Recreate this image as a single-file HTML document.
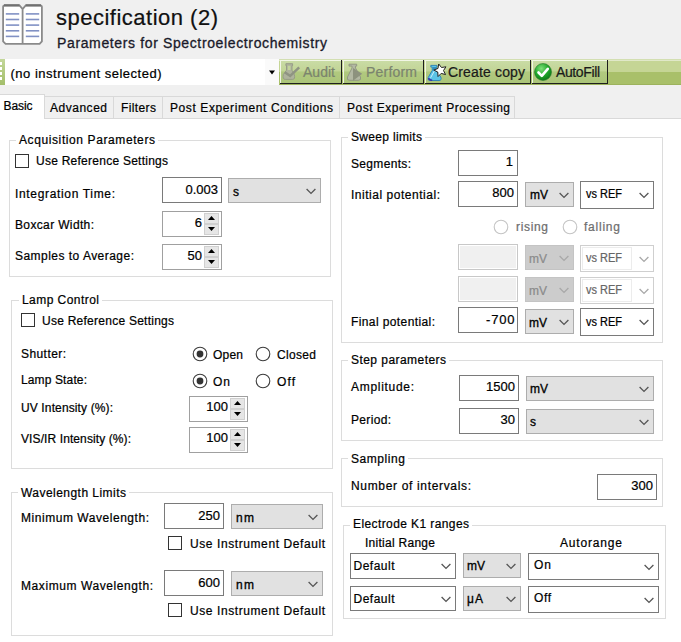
<!DOCTYPE html>
<html><head><meta charset="utf-8"><style>
html,body{margin:0;padding:0;width:681px;height:642px;overflow:hidden;background:#fff;position:relative}
body>div,body>svg{position:absolute}
.t{font-family:'Liberation Sans', sans-serif;white-space:pre;-webkit-text-stroke:0.22px currentColor}
</style></head><body>
<div style="left:0px;top:0px;width:681px;height:119px;background:#f0f0f0"></div>
<svg style="left:1px;top:2px" width="44" height="44" viewBox="0 0 44 44">
<path d="M3.5 3.3 H18.5 L21.6 7 L24.7 3.3 H39.3 Q40.9 3.3 40.9 5 V39.3 L38.6 41.9 H4.6 L2.1 39.3 V5 Q2.1 3.3 3.5 3.3Z" fill="#fff" stroke="#8a8a8a" stroke-width="1.8"/>
<path d="M3 3.3 H18.5 M24.7 3.3 H40" stroke="#707070" stroke-width="2.2"/>
<path d="M21.6 7.5 V42" stroke="#8a8a8a" stroke-width="1.8"/>
<g stroke="#8191c4" stroke-width="1.6">
<path d="M4.8 11.9 H18.2"/><path d="M4.8 17.5 H18.2"/><path d="M4.8 23.1 H18.2"/><path d="M4.8 28.8 H18.2"/><path d="M4.8 34.4 H18.2"/>
<path d="M24.8 11.9 H38.2"/><path d="M24.8 17.5 H38.2"/><path d="M24.8 23.1 H38.2"/><path d="M24.8 28.8 H38.2"/><path d="M24.8 34.4 H38.2"/>
</g></svg>
<div class="t" style="left:56.00px;top:5px;font-size:22px;line-height:25px;letter-spacing:0.495px;font-weight:400;color:#111;">specification (2)</div>
<div class="t" style="left:57.00px;top:35px;font-size:14px;line-height:16px;letter-spacing:0.631px;font-weight:400;color:#1a1a2a;-webkit-text-stroke:0.3px #1a1a2a">Parameters for Spectroelectrochemistry</div>
<div style="left:0px;top:59px;width:681px;height:13px;background:#c5d595"></div>
<div style="left:0px;top:72px;width:681px;height:13px;background:#a9c06a"></div>
<div style="left:0px;top:59px;width:681px;height:1px;background:#d3dfb2"></div>
<div style="left:0px;top:60px;width:681px;height:1px;background:#e0e8c8"></div>
<div style="left:0px;top:84px;width:681px;height:1px;background:#9db35d"></div>
<div style="left:0px;top:59px;width:5px;height:26px;background:linear-gradient(#c3d79a,#a3be6a)"></div>
<div style="left:0px;top:62px;width:2px;height:3px;background:#fff"></div>
<div style="left:0px;top:67px;width:2px;height:3px;background:#fff"></div>
<div style="left:0px;top:72px;width:2px;height:3px;background:#fff"></div>
<div style="left:0px;top:77px;width:2px;height:3px;background:#fff"></div>
<div style="left:5px;top:59px;width:274px;height:26px;background:#fff"></div>
<div style="left:265px;top:59px;width:14px;height:26px;background:#fafafa"></div>
<svg style="left:268px;top:70px" width="8" height="5" viewBox="0 0 8 5"><path d="M1 0.5 H7 L4 4.5Z" fill="#000"/></svg>
<div style="left:280px;top:60px;width:62px;height:24px;background:linear-gradient(#cadca6 0%,#c2d596 45%,#b1c97f 50%,#aac478 100%)"></div>
<div style="left:280px;top:60px;width:61px;height:1px;background:#f2f6e6"></div>
<div style="left:280px;top:60px;width:1px;height:23px;background:#f2f6e6"></div>
<div style="left:280px;top:83px;width:62px;height:1px;background:#1e1e1e"></div>
<div style="left:341px;top:60px;width:1px;height:24px;background:#1e1e1e"></div>
<div class="t" style="left:303.00px;top:64px;font-size:14px;line-height:16px;letter-spacing:0.020px;font-weight:400;color:#7b846e;">Audit</div>
<div style="left:343px;top:60px;width:81px;height:24px;background:linear-gradient(#cadca6 0%,#c2d596 45%,#b1c97f 50%,#aac478 100%)"></div>
<div style="left:343px;top:60px;width:80px;height:1px;background:#f2f6e6"></div>
<div style="left:343px;top:60px;width:1px;height:23px;background:#f2f6e6"></div>
<div style="left:343px;top:83px;width:81px;height:1px;background:#1e1e1e"></div>
<div style="left:423px;top:60px;width:1px;height:24px;background:#1e1e1e"></div>
<div class="t" style="left:366.00px;top:64px;font-size:14px;line-height:16px;letter-spacing:0.201px;font-weight:400;color:#7b846e;">Perform</div>
<div style="left:425px;top:60px;width:106px;height:24px;background:linear-gradient(#cadca6 0%,#c2d596 45%,#b1c97f 50%,#aac478 100%)"></div>
<div style="left:425px;top:60px;width:105px;height:1px;background:#f2f6e6"></div>
<div style="left:425px;top:60px;width:1px;height:23px;background:#f2f6e6"></div>
<div style="left:425px;top:83px;width:106px;height:1px;background:#1e1e1e"></div>
<div style="left:530px;top:60px;width:1px;height:24px;background:#1e1e1e"></div>
<div class="t" style="left:448.00px;top:64px;font-size:14px;line-height:16px;letter-spacing:0.152px;font-weight:400;color:#1a1a1a;">Create copy</div>
<div style="left:532px;top:60px;width:76px;height:24px;background:linear-gradient(#cadca6 0%,#c2d596 45%,#b1c97f 50%,#aac478 100%)"></div>
<div style="left:532px;top:60px;width:75px;height:1px;background:#f2f6e6"></div>
<div style="left:532px;top:60px;width:1px;height:23px;background:#f2f6e6"></div>
<div style="left:532px;top:83px;width:76px;height:1px;background:#1e1e1e"></div>
<div style="left:607px;top:60px;width:1px;height:24px;background:#1e1e1e"></div>
<div class="t" style="left:556.00px;top:64px;font-size:14px;line-height:16px;letter-spacing:-0.384px;font-weight:400;color:#1a1a1a;">AutoFill</div>
<svg style="left:282px;top:62px" width="19" height="19" viewBox="0 0 19 19">
<path d="M3.9 1.7 H10.6 V3.6 H10 V8.2 L12.3 12.5 Q13.5 17.4 10.5 17.4 H3.3 Q0.3 17.4 1.3 12.5 L4.5 8.2 V3.6 H3.9Z" fill="#aeb39c" stroke="#939884" stroke-width="0.9"/>
<path d="M5.8 3.8 H8.5 V8 H5.8Z" fill="#c3d49a"/>
<path d="M2.8 10.2 L8.2 14 L17.2 5.4" fill="none" stroke="#8f9482" stroke-width="2.5"/>
</svg>
<svg style="left:346px;top:62px" width="19" height="20" viewBox="0 0 19 20">
<path d="M3 2.2 H10.7 V4.1 H9.5 V6 L14.5 15 Q15.5 18.3 12.5 18.3 H3.5 Q0.5 18.3 1.5 15 L6 6 V4.1 H3Z" fill="#b3b8a3" stroke="#8e9480" stroke-width="0.9"/>
<path d="M7 6 L16.2 11.8 L7 18.7Z" fill="#8d927e"/>
</svg>
<svg style="left:426px;top:62px" width="22" height="22" viewBox="0 0 22 22">
<path d="M4.8 3.4 H11 V5.1 H10.3 V8.6 L14.8 15 Q16 18.5 13 18.5 H4 Q1.2 18.5 2.2 15.5 L6.2 8.6 V5.1 H4.8Z" fill="#5cc4e6" stroke="#2a80b4" stroke-width="0.9"/>
<path d="M6.5 5 H10 V8.5 H6.5Z" fill="#2f8fbf"/>
<path d="M2.6 16.2 Q3 18.2 6.2 18.3" stroke="#3a32a8" stroke-width="1.6" fill="none"/>
<path d="M4.6 15.8 L8.2 9.2" stroke="#e8f8ff" stroke-width="1" opacity="0.8"/>
<path d="M12.69 2.02 L15.51 5.51 L19.94 4.81 L17.50 8.56 L19.53 12.55 L15.20 11.39 L12.03 14.56 L11.80 10.09 L7.81 8.05 L11.99 6.45Z" fill="#fff" stroke="#222" stroke-width="1"/>
</svg>
<svg style="left:534px;top:63px" width="19" height="19" viewBox="0 0 19 19">
<defs><radialGradient id="gg" cx="0.4" cy="0.3" r="0.7"><stop offset="0" stop-color="#7fe07a"/><stop offset="0.6" stop-color="#1fa52a"/><stop offset="1" stop-color="#0c7a18"/></radialGradient></defs>
<circle cx="9" cy="9" r="8.5" fill="url(#gg)" stroke="#2c7a2c" stroke-width="0.6"/>
<path d="M4.5 9.5 L7.8 12.8 L13.8 5.8" fill="none" stroke="#fff" stroke-width="2.6" stroke-linecap="round" stroke-linejoin="round"/>
</svg>
<div class="t" style="left:10.50px;top:66px;font-size:13px;line-height:15px;letter-spacing:0.502px;font-weight:400;color:#000;">(no instrument selected)</div>
<div style="left:44px;top:96px;width:637px;height:23px;background:#f0f0f0"></div>
<div style="left:44px;top:118px;width:637px;height:1px;background:#d9d9d9"></div>
<div style="left:44px;top:96px;width:471px;height:1px;background:#d9d9d9"></div>
<div style="left:113px;top:96px;width:1px;height:22px;background:#d9d9d9"></div>
<div style="left:162px;top:96px;width:1px;height:22px;background:#d9d9d9"></div>
<div style="left:339px;top:96px;width:1px;height:22px;background:#d9d9d9"></div>
<div style="left:514px;top:96px;width:1px;height:22px;background:#d9d9d9"></div>
<div style="left:0px;top:94px;width:45px;height:25px;background:#fff;border:1px solid #d9d9d9;border-bottom:none;border-left:none;box-sizing:border-box"></div>
<div class="t" style="left:3.50px;top:99px;font-size:12px;line-height:14px;letter-spacing:-0.086px;font-weight:400;color:#000;">Basic</div>
<div class="t" style="left:50.00px;top:101px;font-size:12px;line-height:14px;letter-spacing:0.518px;font-weight:400;color:#000;">Advanced</div>
<div class="t" style="left:121.00px;top:101px;font-size:12px;line-height:14px;letter-spacing:0.388px;font-weight:400;color:#000;">Filters</div>
<div class="t" style="left:170.00px;top:101px;font-size:12px;line-height:14px;letter-spacing:0.597px;font-weight:400;color:#000;">Post Experiment Conditions</div>
<div class="t" style="left:347.00px;top:101px;font-size:12px;line-height:14px;letter-spacing:0.491px;font-weight:400;color:#000;">Post Experiment Processing</div>
<div style="left:9px;top:140px;width:322px;height:137px;border:1px solid #dcdcdc;box-sizing:border-box"></div>
<div style="left:16px;top:138px;width:142px;height:5px;background:#fff"></div>
<div class="t" style="left:19.00px;top:133px;font-size:12px;line-height:14px;letter-spacing:0.600px;font-weight:400;color:#000;">Acquisition Parameters</div>
<div style="left:15px;top:154px;width:14px;height:14px;border:1px solid #333;background:#fff;box-sizing:border-box"></div>
<div class="t" style="left:36.00px;top:154px;font-size:12px;line-height:14px;letter-spacing:0.251px;font-weight:400;color:#000;">Use Reference Settings</div>
<div class="t" style="left:15.00px;top:187px;font-size:12px;line-height:14px;letter-spacing:0.663px;font-weight:400;color:#000;">Integration Time:</div>
<div class="t" style="left:15.00px;top:218px;font-size:12px;line-height:14px;letter-spacing:0.358px;font-weight:400;color:#000;">Boxcar Width:</div>
<div class="t" style="left:15.00px;top:249px;font-size:12px;line-height:14px;letter-spacing:0.471px;font-weight:400;color:#000;">Samples to Average:</div>
<div style="left:162px;top:177px;width:60px;height:26px;border:1px solid #7a7a7a;background:#fff;box-sizing:border-box;"></div>
<div class="t" style="left:185.45px;top:182px;font-size:13px;line-height:15px;letter-spacing:0.000px;font-weight:400;color:#000;">0.003</div>
<div style="left:228px;top:178px;width:93px;height:25px;border:1px solid #adadad;background:#e1e1e1;box-sizing:border-box"></div>
<div class="t" style="left:233.00px;top:185px;font-size:12px;line-height:14px;letter-spacing:0.000px;font-weight:400;color:#000;;-webkit-text-stroke:0.3px currentColor">s</div>
<svg style="left:306.0px;top:187.5px" width="10" height="7" viewBox="0 0 10 7"><path d="M0.6 1 L5 5.4 L9.4 1" fill="none" stroke="#555" stroke-width="1.3"/></svg>
<div style="left:162px;top:211px;width:60px;height:26px;border:1px solid #a0a0a0;background:#fff;box-sizing:border-box"></div>
<div style="left:204px;top:213px;width:15px;height:11px;background:#e6e6e6;border:1px solid #d0d0d0;box-sizing:border-box"></div>
<div style="left:204px;top:224px;width:15px;height:11px;background:#e6e6e6;border:1px solid #d0d0d0;box-sizing:border-box"></div>
<svg style="left:208px;top:216px" width="7" height="4" viewBox="0 0 7 4"><path d="M0 4 L3.5 0 L7 4Z" fill="#000"/></svg>
<svg style="left:208px;top:227px" width="7" height="4" viewBox="0 0 7 4"><path d="M0 0 L3.5 4 L7 0Z" fill="#000"/></svg>
<div class="t" style="left:194.77px;top:215px;font-size:13px;line-height:15px;letter-spacing:0.000px;font-weight:400;color:#000;">6</div>
<div style="left:162px;top:244px;width:60px;height:26px;border:1px solid #a0a0a0;background:#fff;box-sizing:border-box"></div>
<div style="left:204px;top:246px;width:15px;height:11px;background:#e6e6e6;border:1px solid #d0d0d0;box-sizing:border-box"></div>
<div style="left:204px;top:257px;width:15px;height:11px;background:#e6e6e6;border:1px solid #d0d0d0;box-sizing:border-box"></div>
<svg style="left:208px;top:249px" width="7" height="4" viewBox="0 0 7 4"><path d="M0 4 L3.5 0 L7 4Z" fill="#000"/></svg>
<svg style="left:208px;top:260px" width="7" height="4" viewBox="0 0 7 4"><path d="M0 0 L3.5 4 L7 0Z" fill="#000"/></svg>
<div class="t" style="left:187.53px;top:248px;font-size:13px;line-height:15px;letter-spacing:0.000px;font-weight:400;color:#000;">50</div>
<div style="left:11px;top:300px;width:322px;height:169px;border:1px solid #dcdcdc;box-sizing:border-box"></div>
<div style="left:19px;top:298px;width:83px;height:5px;background:#fff"></div>
<div class="t" style="left:22.00px;top:293px;font-size:12px;line-height:14px;letter-spacing:0.450px;font-weight:400;color:#000;">Lamp Control</div>
<div style="left:21px;top:313px;width:14px;height:14px;border:1px solid #333;background:#fff;box-sizing:border-box"></div>
<div class="t" style="left:42.00px;top:314px;font-size:12px;line-height:14px;letter-spacing:0.251px;font-weight:400;color:#000;">Use Reference Settings</div>
<div class="t" style="left:21.00px;top:347px;font-size:12px;line-height:14px;letter-spacing:0.424px;font-weight:400;color:#000;">Shutter:</div>
<div class="t" style="left:21.00px;top:373px;font-size:12px;line-height:14px;letter-spacing:0.128px;font-weight:400;color:#000;">Lamp State:</div>
<div class="t" style="left:21.00px;top:401px;font-size:12px;line-height:14px;letter-spacing:0.123px;font-weight:400;color:#000;">UV Intensity (%):</div>
<div class="t" style="left:21.00px;top:432px;font-size:12px;line-height:14px;letter-spacing:0.098px;font-weight:400;color:#000;">VIS/IR Intensity (%):</div>
<svg style="left:191.5px;top:345.5px" width="16" height="16" viewBox="0 0 16 16"><circle cx="8" cy="8" r="6.8" fill="#fff" stroke="#3c3c3c" stroke-width="1.1"/><circle cx="8" cy="8" r="3.4" fill="#333"/></svg>
<div class="t" style="left:213.00px;top:348px;font-size:12px;line-height:14px;letter-spacing:0.214px;font-weight:400;color:#000;">Open</div>
<svg style="left:255px;top:345.5px" width="16" height="16" viewBox="0 0 16 16"><circle cx="8" cy="8" r="6.8" fill="#fff" stroke="#3c3c3c" stroke-width="1.1"/></svg>
<div class="t" style="left:277.00px;top:348px;font-size:12px;line-height:14px;letter-spacing:0.328px;font-weight:400;color:#000;">Closed</div>
<svg style="left:191.5px;top:373px" width="16" height="16" viewBox="0 0 16 16"><circle cx="8" cy="8" r="6.8" fill="#fff" stroke="#3c3c3c" stroke-width="1.1"/><circle cx="8" cy="8" r="3.4" fill="#333"/></svg>
<div class="t" style="left:213.00px;top:375px;font-size:12px;line-height:14px;letter-spacing:0.984px;font-weight:400;color:#000;">On</div>
<svg style="left:255px;top:373px" width="16" height="16" viewBox="0 0 16 16"><circle cx="8" cy="8" r="6.8" fill="#fff" stroke="#3c3c3c" stroke-width="1.1"/></svg>
<div class="t" style="left:277.00px;top:375px;font-size:12px;line-height:14px;letter-spacing:1.102px;font-weight:400;color:#000;">Off</div>
<div style="left:189px;top:396px;width:59px;height:26px;border:1px solid #a0a0a0;background:#fff;box-sizing:border-box"></div>
<div style="left:230px;top:398px;width:15px;height:11px;background:#e6e6e6;border:1px solid #d0d0d0;box-sizing:border-box"></div>
<div style="left:230px;top:409px;width:15px;height:11px;background:#e6e6e6;border:1px solid #d0d0d0;box-sizing:border-box"></div>
<svg style="left:234px;top:401px" width="7" height="4" viewBox="0 0 7 4"><path d="M0 4 L3.5 0 L7 4Z" fill="#000"/></svg>
<svg style="left:234px;top:412px" width="7" height="4" viewBox="0 0 7 4"><path d="M0 0 L3.5 4 L7 0Z" fill="#000"/></svg>
<div class="t" style="left:206.30px;top:399px;font-size:13px;line-height:15px;letter-spacing:0.000px;font-weight:400;color:#000;">100</div>
<div style="left:189px;top:427px;width:59px;height:26px;border:1px solid #a0a0a0;background:#fff;box-sizing:border-box"></div>
<div style="left:230px;top:429px;width:15px;height:11px;background:#e6e6e6;border:1px solid #d0d0d0;box-sizing:border-box"></div>
<div style="left:230px;top:440px;width:15px;height:11px;background:#e6e6e6;border:1px solid #d0d0d0;box-sizing:border-box"></div>
<svg style="left:234px;top:432px" width="7" height="4" viewBox="0 0 7 4"><path d="M0 4 L3.5 0 L7 4Z" fill="#000"/></svg>
<svg style="left:234px;top:443px" width="7" height="4" viewBox="0 0 7 4"><path d="M0 0 L3.5 4 L7 0Z" fill="#000"/></svg>
<div class="t" style="left:206.30px;top:430px;font-size:13px;line-height:15px;letter-spacing:0.000px;font-weight:400;color:#000;">100</div>
<div style="left:11px;top:492px;width:322px;height:144px;border:1px solid #dcdcdc;box-sizing:border-box"></div>
<div style="left:18px;top:490px;width:111px;height:5px;background:#fff"></div>
<div class="t" style="left:21.00px;top:486px;font-size:12px;line-height:14px;letter-spacing:0.463px;font-weight:400;color:#000;">Wavelength Limits</div>
<div class="t" style="left:21.00px;top:511px;font-size:12px;line-height:14px;letter-spacing:0.541px;font-weight:400;color:#000;">Minimum Wavelength:</div>
<div class="t" style="left:21.00px;top:579px;font-size:12px;line-height:14px;letter-spacing:0.578px;font-weight:400;color:#000;">Maximum Wavelength:</div>
<div style="left:164px;top:503px;width:60px;height:26px;border:1px solid #7a7a7a;background:#fff;box-sizing:border-box;"></div>
<div class="t" style="left:198.30px;top:508px;font-size:13px;line-height:15px;letter-spacing:0.000px;font-weight:400;color:#000;">250</div>
<div style="left:231px;top:504px;width:92px;height:25px;border:1px solid #adadad;background:#e1e1e1;box-sizing:border-box"></div>
<div class="t" style="left:236.00px;top:511px;font-size:12px;line-height:14px;letter-spacing:1.328px;font-weight:400;color:#000;;-webkit-text-stroke:0.3px currentColor">nm</div>
<svg style="left:308.0px;top:513.5px" width="10" height="7" viewBox="0 0 10 7"><path d="M0.6 1 L5 5.4 L9.4 1" fill="none" stroke="#555" stroke-width="1.3"/></svg>
<div style="left:168px;top:536px;width:14px;height:14px;border:1px solid #333;background:#fff;box-sizing:border-box"></div>
<div class="t" style="left:190.00px;top:537px;font-size:12px;line-height:14px;letter-spacing:0.585px;font-weight:400;color:#000;">Use Instrument Default</div>
<div style="left:164px;top:570px;width:60px;height:26px;border:1px solid #7a7a7a;background:#fff;box-sizing:border-box;"></div>
<div class="t" style="left:198.30px;top:575px;font-size:13px;line-height:15px;letter-spacing:0.000px;font-weight:400;color:#000;">600</div>
<div style="left:231px;top:571px;width:92px;height:25px;border:1px solid #adadad;background:#e1e1e1;box-sizing:border-box"></div>
<div class="t" style="left:236.00px;top:578px;font-size:12px;line-height:14px;letter-spacing:1.328px;font-weight:400;color:#000;;-webkit-text-stroke:0.3px currentColor">nm</div>
<svg style="left:308.0px;top:580.5px" width="10" height="7" viewBox="0 0 10 7"><path d="M0.6 1 L5 5.4 L9.4 1" fill="none" stroke="#555" stroke-width="1.3"/></svg>
<div style="left:168px;top:603px;width:14px;height:14px;border:1px solid #333;background:#fff;box-sizing:border-box"></div>
<div class="t" style="left:190.00px;top:604px;font-size:12px;line-height:14px;letter-spacing:0.585px;font-weight:400;color:#000;">Use Instrument Default</div>
<div style="left:341px;top:137px;width:322px;height:206px;border:1px solid #dcdcdc;box-sizing:border-box"></div>
<div style="left:348px;top:135px;width:77px;height:5px;background:#fff"></div>
<div class="t" style="left:351.00px;top:130px;font-size:12px;line-height:14px;letter-spacing:0.331px;font-weight:400;color:#000;">Sweep limits</div>
<div class="t" style="left:351.00px;top:157px;font-size:12px;line-height:14px;letter-spacing:0.328px;font-weight:400;color:#000;">Segments:</div>
<div class="t" style="left:351.00px;top:188px;font-size:12px;line-height:14px;letter-spacing:0.526px;font-weight:400;color:#000;">Initial potential:</div>
<div class="t" style="left:351.00px;top:315px;font-size:12px;line-height:14px;letter-spacing:0.397px;font-weight:400;color:#000;">Final potential:</div>
<div style="left:458px;top:150px;width:60px;height:26px;border:1px solid #7a7a7a;background:#fff;box-sizing:border-box;"></div>
<div class="t" style="left:505.77px;top:154px;font-size:13px;line-height:15px;letter-spacing:0.000px;font-weight:400;color:#000;">1</div>
<div style="left:458px;top:181px;width:60px;height:26px;border:1px solid #7a7a7a;background:#fff;box-sizing:border-box;"></div>
<div class="t" style="left:492.30px;top:185px;font-size:13px;line-height:15px;letter-spacing:0.000px;font-weight:400;color:#000;">800</div>
<div style="left:525px;top:182px;width:49px;height:25px;border:1px solid #adadad;background:#e1e1e1;box-sizing:border-box"></div>
<div class="t" style="left:530.00px;top:188px;font-size:12px;line-height:14px;letter-spacing:0.000px;font-weight:400;color:#000;;-webkit-text-stroke:0.3px currentColor">mV</div>
<svg style="left:559.0px;top:191.5px" width="10" height="7" viewBox="0 0 10 7"><path d="M0.6 1 L5 5.4 L9.4 1" fill="none" stroke="#555" stroke-width="1.3"/></svg>
<div style="left:580px;top:181px;width:74px;height:28px;border:1px solid #7a7a7a;background:#fff;box-sizing:border-box"></div>
<div class="t" style="left:586.00px;top:187px;font-size:12px;line-height:14px;letter-spacing:0.000px;font-weight:400;color:#000;transform:scaleX(0.9150);transform-origin:0 0;">vs REF</div>
<svg style="left:639.0px;top:192.0px" width="10" height="7" viewBox="0 0 10 7"><path d="M0.6 1 L5 5.4 L9.4 1" fill="none" stroke="#555" stroke-width="1.3"/></svg>
<svg style="left:493px;top:219px" width="16" height="16" viewBox="0 0 16 16"><circle cx="8" cy="8" r="6.8" fill="#fff" stroke="#c4c4c4" stroke-width="1.1"/></svg>
<div class="t" style="left:516.00px;top:220px;font-size:12px;line-height:14px;letter-spacing:0.662px;font-weight:400;color:#6d6d6d;">rising</div>
<svg style="left:562px;top:219px" width="16" height="16" viewBox="0 0 16 16"><circle cx="8" cy="8" r="6.8" fill="#fff" stroke="#c4c4c4" stroke-width="1.1"/></svg>
<div class="t" style="left:584.00px;top:220px;font-size:12px;line-height:14px;letter-spacing:0.773px;font-weight:400;color:#6d6d6d;">falling</div>
<div style="left:458px;top:244px;width:60px;height:26px;border:1px solid #c8c8c8;background:#f0f0f0;box-sizing:border-box;box-shadow:inset 0 0 0 1px #fff"></div>
<div style="left:525px;top:245px;width:49px;height:25px;border:1px solid #c4c4c4;background:#cccccc;box-sizing:border-box"></div>
<div class="t" style="left:529.00px;top:252px;font-size:12px;line-height:14px;letter-spacing:0.000px;font-weight:400;color:#8a8a8a;">mV</div>
<svg style="left:559.0px;top:254.5px" width="10" height="7" viewBox="0 0 10 7"><path d="M0.6 1 L5 5.4 L9.4 1" fill="none" stroke="#a8a8a8" stroke-width="1.3"/></svg>
<div style="left:580px;top:245px;width:74px;height:27px;border:1px solid #cfcfcf;background:#fff;box-sizing:border-box"></div>
<div style="left:582px;top:247px;width:50px;height:23px;border:1px solid #ececec;box-sizing:border-box"></div>
<div class="t" style="left:586.00px;top:251px;font-size:12px;line-height:14px;letter-spacing:0.000px;font-weight:400;color:#666;transform:scaleX(0.9150);transform-origin:0 0;">vs REF</div>
<svg style="left:639.0px;top:255.5px" width="10" height="7" viewBox="0 0 10 7"><path d="M0.6 1 L5 5.4 L9.4 1" fill="none" stroke="#a8a8a8" stroke-width="1.3"/></svg>
<div style="left:458px;top:276px;width:60px;height:26px;border:1px solid #c8c8c8;background:#f0f0f0;box-sizing:border-box;box-shadow:inset 0 0 0 1px #fff"></div>
<div style="left:525px;top:277px;width:49px;height:25px;border:1px solid #c4c4c4;background:#cccccc;box-sizing:border-box"></div>
<div class="t" style="left:529.00px;top:284px;font-size:12px;line-height:14px;letter-spacing:0.000px;font-weight:400;color:#8a8a8a;">mV</div>
<svg style="left:559.0px;top:286.5px" width="10" height="7" viewBox="0 0 10 7"><path d="M0.6 1 L5 5.4 L9.4 1" fill="none" stroke="#a8a8a8" stroke-width="1.3"/></svg>
<div style="left:580px;top:277px;width:74px;height:27px;border:1px solid #cfcfcf;background:#fff;box-sizing:border-box"></div>
<div style="left:582px;top:279px;width:50px;height:23px;border:1px solid #ececec;box-sizing:border-box"></div>
<div class="t" style="left:586.00px;top:283px;font-size:12px;line-height:14px;letter-spacing:0.000px;font-weight:400;color:#666;transform:scaleX(0.9150);transform-origin:0 0;">vs REF</div>
<svg style="left:639.0px;top:287.5px" width="10" height="7" viewBox="0 0 10 7"><path d="M0.6 1 L5 5.4 L9.4 1" fill="none" stroke="#a8a8a8" stroke-width="1.3"/></svg>
<div style="left:458px;top:307px;width:60px;height:26px;border:1px solid #7a7a7a;background:#fff;box-sizing:border-box;"></div>
<div class="t" style="left:486.00px;top:312px;font-size:13px;line-height:15px;letter-spacing:0.823px;font-weight:400;color:#000;">-700</div>
<div style="left:525px;top:309px;width:49px;height:25px;border:1px solid #adadad;background:#e1e1e1;box-sizing:border-box"></div>
<div class="t" style="left:529.00px;top:316px;font-size:12px;line-height:14px;letter-spacing:0.000px;font-weight:400;color:#000;;-webkit-text-stroke:0.3px currentColor">mV</div>
<svg style="left:559.0px;top:318.5px" width="10" height="7" viewBox="0 0 10 7"><path d="M0.6 1 L5 5.4 L9.4 1" fill="none" stroke="#555" stroke-width="1.3"/></svg>
<div style="left:580px;top:308px;width:74px;height:28px;border:1px solid #7a7a7a;background:#fff;box-sizing:border-box"></div>
<div class="t" style="left:586.00px;top:315px;font-size:12px;line-height:14px;letter-spacing:0.000px;font-weight:400;color:#000;transform:scaleX(0.9150);transform-origin:0 0;">vs REF</div>
<svg style="left:639.0px;top:319.0px" width="10" height="7" viewBox="0 0 10 7"><path d="M0.6 1 L5 5.4 L9.4 1" fill="none" stroke="#555" stroke-width="1.3"/></svg>
<div style="left:341px;top:360px;width:322px;height:81px;border:1px solid #dcdcdc;box-sizing:border-box"></div>
<div style="left:348px;top:358px;width:101px;height:5px;background:#fff"></div>
<div class="t" style="left:351.00px;top:353px;font-size:12px;line-height:14px;letter-spacing:0.449px;font-weight:400;color:#000;">Step parameters</div>
<div class="t" style="left:351.00px;top:380px;font-size:12px;line-height:14px;letter-spacing:0.700px;font-weight:400;color:#000;">Amplitude:</div>
<div class="t" style="left:351.00px;top:413px;font-size:12px;line-height:14px;letter-spacing:0.328px;font-weight:400;color:#000;">Period:</div>
<div style="left:459px;top:375px;width:60px;height:26px;border:1px solid #7a7a7a;background:#fff;box-sizing:border-box;"></div>
<div class="t" style="left:486.08px;top:379px;font-size:13px;line-height:15px;letter-spacing:0.000px;font-weight:400;color:#000;">1500</div>
<div style="left:526px;top:376px;width:128px;height:25px;border:1px solid #adadad;background:#e1e1e1;box-sizing:border-box"></div>
<div class="t" style="left:530.00px;top:382px;font-size:12px;line-height:14px;letter-spacing:0.000px;font-weight:400;color:#000;;-webkit-text-stroke:0.3px currentColor">mV</div>
<svg style="left:639.0px;top:385.5px" width="10" height="7" viewBox="0 0 10 7"><path d="M0.6 1 L5 5.4 L9.4 1" fill="none" stroke="#555" stroke-width="1.3"/></svg>
<div style="left:459px;top:408px;width:60px;height:26px;border:1px solid #7a7a7a;background:#fff;box-sizing:border-box;"></div>
<div class="t" style="left:500.53px;top:412px;font-size:13px;line-height:15px;letter-spacing:0.000px;font-weight:400;color:#000;">30</div>
<div style="left:526px;top:409px;width:128px;height:25px;border:1px solid #adadad;background:#e1e1e1;box-sizing:border-box"></div>
<div class="t" style="left:530.00px;top:415px;font-size:12px;line-height:14px;letter-spacing:0.000px;font-weight:400;color:#000;;-webkit-text-stroke:0.3px currentColor">s</div>
<svg style="left:639.0px;top:418.5px" width="10" height="7" viewBox="0 0 10 7"><path d="M0.6 1 L5 5.4 L9.4 1" fill="none" stroke="#555" stroke-width="1.3"/></svg>
<div style="left:341px;top:458px;width:322px;height:49px;border:1px solid #dcdcdc;box-sizing:border-box"></div>
<div style="left:348px;top:456px;width:60px;height:5px;background:#fff"></div>
<div class="t" style="left:351.00px;top:452px;font-size:12px;line-height:14px;letter-spacing:0.567px;font-weight:400;color:#000;">Sampling</div>
<div class="t" style="left:351.00px;top:479px;font-size:12px;line-height:14px;letter-spacing:0.664px;font-weight:400;color:#000;">Number of intervals:</div>
<div style="left:597px;top:474px;width:60px;height:26px;border:1px solid #7a7a7a;background:#fff;box-sizing:border-box;"></div>
<div class="t" style="left:631.30px;top:478px;font-size:13px;line-height:15px;letter-spacing:0.000px;font-weight:400;color:#000;">300</div>
<div style="left:343px;top:525px;width:323px;height:94px;border:1px solid #dcdcdc;box-sizing:border-box"></div>
<div style="left:350px;top:523px;width:122px;height:5px;background:#fff"></div>
<div class="t" style="left:353.00px;top:517px;font-size:12px;line-height:14px;letter-spacing:0.404px;font-weight:400;color:#000;">Electrode K1 ranges</div>
<div class="t" style="left:365.00px;top:536px;font-size:12px;line-height:14px;letter-spacing:0.273px;font-weight:400;color:#000;">Initial Range</div>
<div class="t" style="left:560.00px;top:536px;font-size:12px;line-height:14px;letter-spacing:0.826px;font-weight:400;color:#000;">Autorange</div>
<div style="left:350px;top:553px;width:106px;height:26px;border:1px solid #7a7a7a;background:#fff;box-sizing:border-box"></div>
<div class="t" style="left:353.50px;top:559px;font-size:12px;line-height:14px;letter-spacing:0.495px;font-weight:400;color:#000;">Default</div>
<svg style="left:441.0px;top:563.0px" width="10" height="7" viewBox="0 0 10 7"><path d="M0.6 1 L5 5.4 L9.4 1" fill="none" stroke="#555" stroke-width="1.3"/></svg>
<div style="left:463px;top:553px;width:58px;height:25px;border:1px solid #adadad;background:#e1e1e1;box-sizing:border-box"></div>
<div class="t" style="left:467.00px;top:559px;font-size:12px;line-height:14px;letter-spacing:0.000px;font-weight:400;color:#000;;-webkit-text-stroke:0.3px currentColor">mV</div>
<svg style="left:506.0px;top:562.5px" width="10" height="7" viewBox="0 0 10 7"><path d="M0.6 1 L5 5.4 L9.4 1" fill="none" stroke="#555" stroke-width="1.3"/></svg>
<div style="left:528px;top:553px;width:131px;height:27px;border:1px solid #7a7a7a;background:#fff;box-sizing:border-box"></div>
<div class="t" style="left:534.00px;top:558px;font-size:12px;line-height:14px;letter-spacing:0.984px;font-weight:400;color:#000;">On</div>
<svg style="left:644.0px;top:563.5px" width="10" height="7" viewBox="0 0 10 7"><path d="M0.6 1 L5 5.4 L9.4 1" fill="none" stroke="#555" stroke-width="1.3"/></svg>
<div style="left:350px;top:586px;width:106px;height:25px;border:1px solid #7a7a7a;background:#fff;box-sizing:border-box"></div>
<div class="t" style="left:353.50px;top:592px;font-size:12px;line-height:14px;letter-spacing:0.495px;font-weight:400;color:#000;">Default</div>
<svg style="left:441.0px;top:595.5px" width="10" height="7" viewBox="0 0 10 7"><path d="M0.6 1 L5 5.4 L9.4 1" fill="none" stroke="#555" stroke-width="1.3"/></svg>
<div style="left:463px;top:586px;width:58px;height:25px;border:1px solid #adadad;background:#e1e1e1;box-sizing:border-box"></div>
<div class="t" style="left:467.00px;top:592px;font-size:12px;line-height:14px;letter-spacing:1.078px;font-weight:400;color:#000;;-webkit-text-stroke:0.3px currentColor">μA</div>
<svg style="left:506.0px;top:595.5px" width="10" height="7" viewBox="0 0 10 7"><path d="M0.6 1 L5 5.4 L9.4 1" fill="none" stroke="#555" stroke-width="1.3"/></svg>
<div style="left:528px;top:586px;width:131px;height:27px;border:1px solid #7a7a7a;background:#fff;box-sizing:border-box"></div>
<div class="t" style="left:534.00px;top:591px;font-size:12px;line-height:14px;letter-spacing:0.602px;font-weight:400;color:#000;">Off</div>
<svg style="left:644.0px;top:596.5px" width="10" height="7" viewBox="0 0 10 7"><path d="M0.6 1 L5 5.4 L9.4 1" fill="none" stroke="#555" stroke-width="1.3"/></svg>
</body></html>
